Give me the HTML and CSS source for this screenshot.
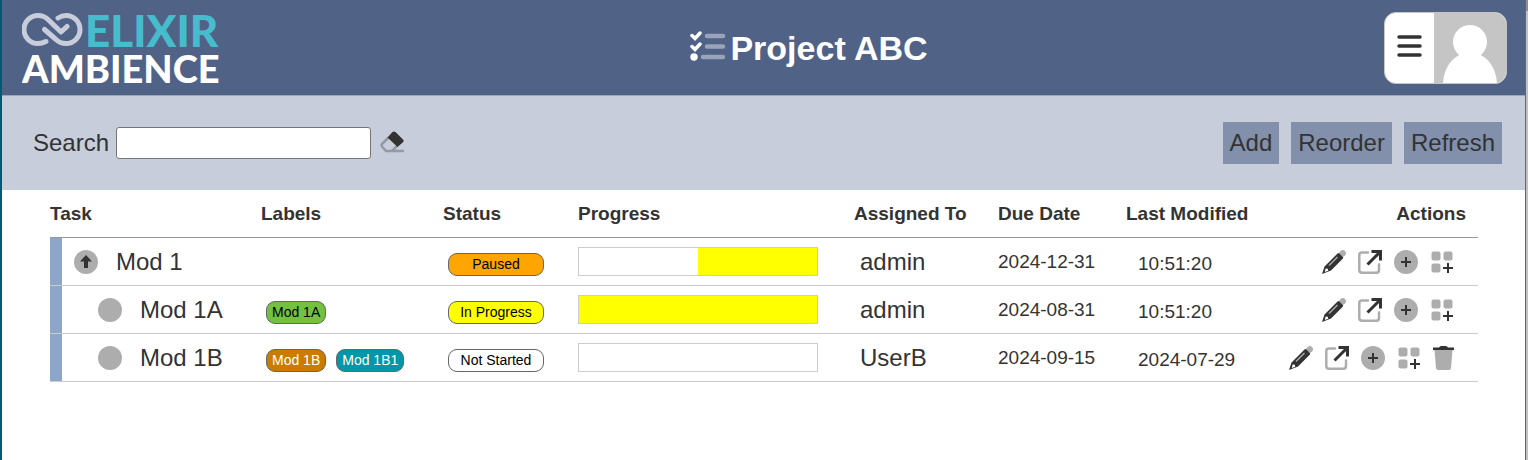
FILE: index.html
```html
<!DOCTYPE html>
<html lang="en">
<head>
  <meta charset="UTF-8">
  <title>Project ABC</title>
  <link rel="stylesheet" href="styles.css">
</head>
<body>

<!-- Shared icons -->
<svg class="sprite" aria-hidden="true">
  <symbol id="pencil" viewBox="0 0 24 24">
    <path class="gray" d="M17 3l1.500-2q2.500-2 4.500 0t0 4.500L21 7z"/>
    <path class="dark" d="M15.500 3.500q1-1 2 0l3.200 3.200q1 1 0 2L9 20.500 0 24l2.500-7.500z"/>
    <path d="M3.600 18.500l2.200.3.400 1.900-3.400 1.200z" fill="#fff"/>
    <path d="M7 15.500L15.500 7" fill="none" stroke="#adadad" stroke-width="1.500"/>
  </symbol>
  <symbol id="open" viewBox="0 0 24 24">
    <path class="line" d="M10 2.500H4Q1.300 2.500 1.300 5v15q0 2.700 2.700 2.700h14.500q2.500 0 2.500-2.700v-5.500"/>
    <path class="arrow" d="M9.500 14.500L22 2M13.500 1.500h9v9"/>
  </symbol>
  <symbol id="add" viewBox="0 0 24 24">
    <circle class="gray" cx="12" cy="12" r="12"/>
    <path class="plus" d="M12 7v10M7 12h10"/>
  </symbol>
  <symbol id="grid" viewBox="0 0 24 24">
    <rect class="gray" x="1.500" y="1.500" width="9" height="9" rx="2"/>
    <rect class="gray" x="13.500" y="1.500" width="9" height="9" rx="2"/>
    <rect class="gray" x="1.500" y="13.500" width="9" height="9" rx="2"/>
    <path class="plus" d="M18 13v10M13 18h10"/>
  </symbol>
  <symbol id="trash" viewBox="0 0 21 24">
    <path class="gray" d="M1.500 4h18L18 22q-.2 2-2 2H5q-1.800 0-2-2z"/>
    <path class="dark" d="M0 1.500h6Q7 0 8 0h5q1 0 2 1.500h6V4H0z"/>
  </symbol>
</svg>

<div class="page">
  <main class="app">
    <header class="header">
      <svg class="logo" width="212" height="72" viewBox="0 0 212 72">
        <path d="M24 29.500Q20 31.500 16 31.500A14 14 0 0 1 16 3.500Q22 3.500 26 7.500L39 20 45 14.500"/>
        <path d="M36 6Q40 3.500 44 3.500A14 14 0 0 1 44 31.500Q38 31.500 34 27.500L22.500 17.500"/>
        <text class="elixir" x="63" y="35">ELIXIR</text>
        <text class="ambience" x="0" y="71">AMBIENCE</text>
      </svg>
      <h1 class="title">
        <svg width="36" height="34" viewBox="0 0 36 34">
          <path class="check" d="M2 4.500l3 3 5-5.500M2 15.500l3 3 5-5.500"/>
          <circle cx="4" cy="26" r="3.700" fill="#fff"/>
          <path class="item" d="M17 5h16M17 15.500h16M13 26h20"/>
        </svg>
        Project ABC
      </h1>
      <button class="user-menu" aria-label="Menu">
        <svg class="bars" width="25" height="26" viewBox="0 0 25 26">
          <path d="M2 2h21M2 11h21M2 20h21"/>
        </svg>
        <svg class="avatar" width="72" height="70" viewBox="0 0 72 70">
          <rect width="72" height="70" fill="#c5c5c5"/>
          <circle cx="36" cy="29" r="17" fill="#fff"/>
          <path d="M9 70C10 55 18 44 28 41h16c10 3 18 14 19 29z" fill="#fff"/>
        </svg>
      </button>
    </header>

    <div class="toolbar">
      <label for="search">Search</label>
      <input type="text" id="search">
      <button class="icon" aria-label="Clear search">
        <svg width="24" height="24" viewBox="0 0 24 24">
          <path class="eraser" d="M8 7L2 13q-1 1 0 2.500L6 20h17M6 20h6l5-5"/>
          <path class="dark" d="M7.500 6.500l5-5.500q1.500-1 3 0l7.500 7.500q1.200 1.200 0 2.700L17.500 16z"/>
        </svg>
      </button>
      <div class="buttons">
        <button class="btn">Add</button>
        <button class="btn">Reorder</button>
        <button class="btn">Refresh</button>
      </div>
    </div>

    <div class="content">
      <table>
        <thead>
          <tr>
            <th class="col-task">Task</th>
            <th class="col-labels">Labels</th>
            <th class="col-status">Status</th>
            <th class="col-progress">Progress</th>
            <th class="col-assigned">Assigned To</th>
            <th class="col-due">Due Date</th>
            <th class="col-modified">Last Modified</th>
            <th class="col-actions">Actions</th>
          </tr>
        </thead>
        <tbody>
          <tr>
            <td>
              <div class="task">
                <svg width="24" height="24" viewBox="0 0 24 24">
                  <circle class="gray" cx="12" cy="12" r="12"/>
                  <path class="dark" d="M12 5l6 6.500h-4V18h-4v-6.500H6z"/>
                </svg>
                Mod 1
              </div>
            </td>
            <td></td>
            <td class="pills"><span class="pill status paused">Paused</span></td>
            <td><div class="progress"><div class="fill" style="width: 50%"></div></div></td>
            <td class="assigned">admin</td>
            <td class="date">2024-12-31</td>
            <td class="modified">10:51:20</td>
            <td>
              <div class="actions">
                <button class="icon" aria-label="Edit"><svg width="24" height="24"><use href="#pencil"/></svg></button>
                <button class="icon" aria-label="Open"><svg width="24" height="24"><use href="#open"/></svg></button>
                <button class="icon" aria-label="Add"><svg width="24" height="24"><use href="#add"/></svg></button>
                <button class="icon" aria-label="Add subtask"><svg width="24" height="24"><use href="#grid"/></svg></button>
              </div>
            </td>
          </tr>
          <tr>
            <td>
              <div class="task child">
                <svg width="24" height="24" viewBox="0 0 24 24"><circle class="gray" cx="12" cy="12" r="12"/></svg>
                Mod 1A
              </div>
            </td>
            <td class="pills"><span class="pill green">Mod 1A</span></td>
            <td class="pills"><span class="pill status in-progress">In Progress</span></td>
            <td><div class="progress"><div class="fill" style="width: 100%"></div></div></td>
            <td class="assigned">admin</td>
            <td class="date">2024-08-31</td>
            <td class="modified">10:51:20</td>
            <td>
              <div class="actions">
                <button class="icon" aria-label="Edit"><svg width="24" height="24"><use href="#pencil"/></svg></button>
                <button class="icon" aria-label="Open"><svg width="24" height="24"><use href="#open"/></svg></button>
                <button class="icon" aria-label="Add"><svg width="24" height="24"><use href="#add"/></svg></button>
                <button class="icon" aria-label="Add subtask"><svg width="24" height="24"><use href="#grid"/></svg></button>
              </div>
            </td>
          </tr>
          <tr>
            <td>
              <div class="task child">
                <svg width="24" height="24" viewBox="0 0 24 24"><circle class="gray" cx="12" cy="12" r="12"/></svg>
                Mod 1B
              </div>
            </td>
            <td class="pills"><span class="pill brown">Mod 1B</span><span class="pill teal">Mod 1B1</span></td>
            <td class="pills"><span class="pill status">Not Started</span></td>
            <td><div class="progress"></div></td>
            <td class="assigned">UserB</td>
            <td class="date">2024-09-15</td>
            <td class="modified">2024-07-29</td>
            <td>
              <div class="actions">
                <button class="icon" aria-label="Edit"><svg width="24" height="24"><use href="#pencil"/></svg></button>
                <button class="icon" aria-label="Open"><svg width="24" height="24"><use href="#open"/></svg></button>
                <button class="icon" aria-label="Add"><svg width="24" height="24"><use href="#add"/></svg></button>
                <button class="icon" aria-label="Add subtask"><svg width="24" height="24"><use href="#grid"/></svg></button>
                <button class="icon" aria-label="Delete"><svg width="21" height="24"><use href="#trash"/></svg></button>
              </div>
            </td>
          </tr>
        </tbody>
      </table>
    </div>
  </main>
  <div class="edge"></div>
</div>

</body>
</html>
```
FILE: styles.css
```css
* {
  box-sizing: border-box;
}

body {
  margin: 0;
  font-family: "Liberation Sans", Arial, sans-serif;
  font-size: 24px;
  color: #333;
  background: #fff;
}

button {
  font: inherit;
  color: inherit;
  border: none;
  cursor: pointer;
}

svg {
  display: block;
  flex: none;
}

.sprite {
  position: absolute;
  width: 0;
  height: 0;
}

.page {
  display: flex;
  min-height: 100vh;
  border-left: 2px solid #005a73;
}

.app {
  flex: 1;
}

/* strip down the right side of the window */
.edge {
  width: 3px;
  border-left: 1px solid #666;
  background: linear-gradient(#8f8f8f 11px, #c1c1c1 11px);
}

/* Header */
.header {
  display: flex;
  align-items: center;
  height: 96px;
  padding: 0 18px 0 20px;
  background: #516287;
  border-bottom: 1px solid #a0a6ba;
}

.logo {
  font-family: Lato, sans-serif;
  font-weight: 900;
}

.logo path {
  fill: none;
  stroke: #c7cddb;
  stroke-width: 5;
  stroke-linecap: round;
  stroke-linejoin: round;
}

.elixir {
  font-size: 44px;
  fill: #47bccc;
}

.ambience {
  font-size: 38px;
  fill: #fff;
}

.title {
  flex: 1;
  display: flex;
  align-items: center;
  justify-content: center;
  gap: 4px;
  margin: 0;
  font-size: 34px;
  line-height: 36px;
  color: #fff;
}

.title path {
  fill: none;
  stroke-linecap: round;
}

.title .check {
  stroke: #fff;
  stroke-width: 3.5;
}

.title .item {
  stroke: #99a3b9;
  stroke-width: 4.5;
}

.user-menu {
  display: flex;
  align-items: center;
  padding: 0;
  background: #fff;
  border: 1px solid #c5c5c5;
  border-radius: 12px;
  overflow: hidden;
}

.bars {
  margin: 0 12px;
  stroke: #333;
  stroke-width: 3.5;
  stroke-linecap: round;
}

/* Toolbar */
.toolbar {
  display: flex;
  align-items: center;
  height: 94px;
  padding: 0 23px 0 31px;
  background: #c7cddb;
}

.toolbar input {
  width: 255px;
  height: 32px;
  margin: 0 9px 0 7px;
  padding: 0 4px;
  font: inherit;
  border: 1px solid #767676;
  border-radius: 3px;
}

.icon {
  padding: 0;
  background: none;
}

.eraser {
  fill: none;
  stroke: #9399a5;
  stroke-width: 2.5;
  stroke-linecap: round;
}

.buttons {
  display: flex;
  gap: 12px;
  margin-left: auto;
}

.btn {
  height: 42px;
  padding: 0 7px;
  background: #8290ac;
}

/* Table */
.content {
  padding: 0 47px 0 48px;
}

table {
  width: 100%;
  table-layout: fixed;
  border-spacing: 0;
}

th, td {
  height: 48px;
  padding: 0;
  text-align: left;
  border-bottom: 1px solid #ccc;
}

th {
  font-size: 19px;
  border-color: #999;
}

.col-task { width: 211px; }
.col-labels { width: 182px; }
.col-status { width: 135px; }
.col-progress { width: 276px; }
.col-assigned { width: 144px; }
.col-due { width: 128px; }
.col-modified { width: 140px; }

th.col-actions {
  text-align: right;
  padding-right: 12px;
}

.task {
  display: flex;
  align-items: center;
  gap: 18px;
  height: 47px;
  padding-left: 12px;
  border-left: 12px solid #8da5c8;
}

.task.child {
  padding-left: 36px;
}

.pills {
  padding-top: 6px;
  font-size: 0;
}

.pill {
  display: inline-block;
  margin: 0 5px;
  padding: 0 5px;
  font-size: 14px;
  line-height: 21px;
  text-align: center;
  color: #000;
  border: 1px solid #666;
  border-radius: 9px;
}

.status { width: 96px; }
.paused { background: #ffa500; }
.in-progress { background: #ff0; }
.green { background: #73c140; }

.brown {
  color: #fff;
  background: #cb7b00;
}

.teal {
  color: #fff;
  background: #0097aa;
}

.progress {
  display: flex;
  justify-content: flex-end;
  width: 240px;
  height: 29px;
  border: 1px solid #ccc;
}

.fill {
  background: #ff0;
}

.assigned {
  padding-left: 6px;
}

.date, .modified {
  font-size: 19px;
}

.modified {
  padding: 4px 0 0 12px;
}

.actions {
  display: flex;
  justify-content: flex-end;
  gap: 12px;
  padding-right: 24px;
}

/* Icon parts */
.gray { fill: #adadad; }
.dark { fill: #333; }

.line {
  fill: none;
  stroke: #adadad;
  stroke-width: 2.5;
  stroke-linecap: round;
}

.arrow {
  fill: none;
  stroke: #333;
  stroke-width: 3;
}

.plus {
  stroke: #333;
  stroke-width: 2;
}
```
